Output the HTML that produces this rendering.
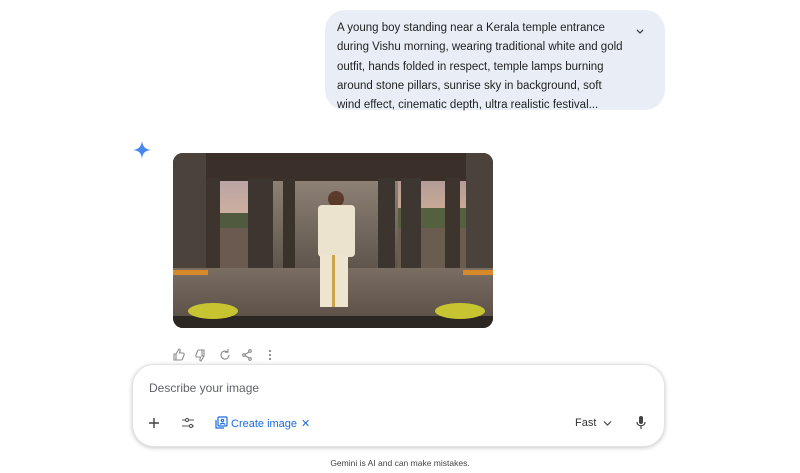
<!DOCTYPE html>
<html><head><meta charset="utf-8"><style>
*{margin:0;padding:0;box-sizing:border-box}
body{width:800px;height:473px;background:#fff;font-family:"Liberation Sans",Arial,sans-serif;position:relative;overflow:hidden;color:#1f1f1f}
.bubble{position:absolute;left:325px;top:10px;width:340px;height:100px;background:#e9eef6;border-radius:20px;padding:9px 0 0 12px;font-size:11.5px;line-height:19.3px;color:#1f1f1f;white-space:nowrap}
.chev{position:absolute;right:20px;top:18px}
.img{position:absolute;left:173px;top:153px;width:320px;height:175px;border-radius:10px;overflow:hidden;background:#2e2723}
.img div{position:absolute}
.acts{position:absolute;top:348px;left:173px}
.box{position:absolute;left:132px;top:364px;width:533px;height:83px;border-radius:22px;background:#fff;box-shadow:0 1px 4px rgba(0,0,0,.22);border:1px solid #e3e3e3}
.ph{position:absolute;left:16px;top:16px;font-size:12px;color:#5f6368}
.foot{position:absolute;top:458px;left:0;width:800px;text-align:center;font-size:8.5px;color:#444}
</style></head><body>
<div class="bubble">A young boy standing near a Kerala temple entrance<br>during Vishu morning, wearing traditional white and gold<br>outfit, hands folded in respect, temple lamps burning<br>around stone pillars, sunrise sky in background, soft<br>wind effect, cinematic depth, ultra realistic festival...
<svg class="chev" width="10" height="8" viewBox="0 0 10 8"><path d="M2 2l3 3 3-3" stroke="#444" stroke-width="1.3" fill="none"/></svg></div>

<svg style="position:absolute;left:133px;top:141px" width="18" height="18" viewBox="0 0 18 18"><path d="M9 0C9.6 5 12 8.4 18 9 12 9.6 9.6 12 9 18 8.4 12 6 9.6 0 9 6 8.4 8.4 5 9 0Z" fill="#4a86f0"/></svg>

<div class="img">
 <div style="left:0;top:0;width:320px;height:120px;background:#3a322c"></div>
 <div style="left:25px;top:28px;width:75px;height:50px;background:linear-gradient(#b9a4a4,#d8b59a)"></div>
 <div style="left:225px;top:28px;width:75px;height:50px;background:linear-gradient(#b39c98,#d9b392)"></div>
 <div style="left:25px;top:60px;width:75px;height:20px;background:#4f5a3e"></div>
 <div style="left:225px;top:55px;width:75px;height:25px;background:#55603f"></div>
 <div style="left:97px;top:28px;width:128px;height:90px;background:linear-gradient(#8d8075,#5e544b)"></div>
 <div style="left:25px;top:75px;width:75px;height:40px;background:#6b5a4f"></div>
 <div style="left:225px;top:75px;width:75px;height:40px;background:#6b5c50"></div>
 <div style="left:0;top:0;width:320px;height:28px;background:#3b3029"></div>
 <div style="left:0;top:0;width:33px;height:125px;background:#4a423b"></div>
 <div style="left:33px;top:25px;width:14px;height:90px;background:#3c342d"></div>
 <div style="left:75px;top:25px;width:25px;height:100px;background:#3d352f"></div>
 <div style="left:110px;top:25px;width:12px;height:90px;background:#3a332c"></div>
 <div style="left:205px;top:25px;width:17px;height:90px;background:#3c342e"></div>
 <div style="left:228px;top:25px;width:20px;height:100px;background:#3e3630"></div>
 <div style="left:272px;top:25px;width:15px;height:90px;background:#3c342d"></div>
 <div style="left:293px;top:0;width:27px;height:125px;background:#4a423b"></div>
 <div style="left:0;top:115px;width:320px;height:50px;background:linear-gradient(#7a6d62,#5d5148)"></div>
 <div style="left:0;top:163px;width:320px;height:12px;background:#2d2723"></div>
 <div style="left:15px;top:150px;width:50px;height:16px;background:#c7c431;border-radius:50%"></div>
 <div style="left:262px;top:150px;width:50px;height:16px;background:#c7c431;border-radius:50%"></div>
 <div style="left:0;top:117px;width:35px;height:5px;background:#d88a2a"></div>
 <div style="left:290px;top:117px;width:30px;height:5px;background:#d88a2a"></div>
 <div style="left:155px;top:38px;width:16px;height:16px;background:#5a3a28;border-radius:50%"></div>
 <div style="left:145px;top:52px;width:37px;height:52px;background:#ece3cf;border-radius:4px"></div>
 <div style="left:147px;top:102px;width:28px;height:52px;background:#eee5d0"></div>
 <div style="left:159px;top:102px;width:3px;height:52px;background:#c9a44a"></div>
</div>

<svg class="acts" width="110" height="14" viewBox="0 0 110 14" fill="none" stroke="#8a8a8a" stroke-width="1.1">
<path d="M1 6h2v6H1zM3 6l3-5c1 0 1.5 1 1 2L6.5 5H10c1 0 1.5 1 1 2l-1.5 4c-.2.6-.7 1-1.3 1H3"/>
<path d="M34 8h-2V2h2zM34 8l-3 5c-1 0-1.5-1-1-2l.5-2H27c-1 0-1.5-1-1-2l1.5-4c.2-.6.7-1 1.3-1H34" transform="translate(-3 0)"/>
<path d="M56 7a4 4 0 1 1-1.2-2.8M55 1v3.2h-3.2"/>
<circle cx="77" cy="3" r="1.3"/><circle cx="71" cy="7" r="1.3"/><circle cx="77" cy="11" r="1.3"/><path d="M72 6.5l4-2.5M72 7.5l4 2.5"/>
<circle cx="97" cy="3" r=".6" fill="#8a8a8a"/><circle cx="97" cy="7" r=".6" fill="#8a8a8a"/><circle cx="97" cy="11" r=".6" fill="#8a8a8a"/>
</svg>

<div class="box">
 <div class="ph">Describe your image</div>
 <svg style="position:absolute;left:15px;top:52px" width="12" height="12"><path d="M6 1v10M1 6h10" stroke="#444" stroke-width="1.4"/></svg>
 <svg style="position:absolute;left:48px;top:52px" width="14" height="12" fill="none" stroke="#555" stroke-width="1.1"><path d="M1 3h3M8 3h5M1 9h7M12 9h1"/><circle cx="6" cy="3" r="1.6"/><circle cx="10" cy="9" r="1.6"/></svg>
 <svg style="position:absolute;left:81px;top:51px" width="14" height="14" fill="none" stroke="#1a6be0" stroke-width="1.2"><rect x="4" y="1" width="9" height="9" rx="1"/><path d="M2 4v8h8"/><circle cx="8.5" cy="4.5" r="1.2"/><path d="M6 8.5c1-1.5 4-1.5 5 0"/></svg>
 <div style="position:absolute;left:98px;top:53px;font-size:11px;color:#1a6be0">Create image</div>
 <div style="position:absolute;left:168px;top:52px;font-size:11px;color:#1a6be0">✕</div>
 <div style="position:absolute;left:442px;top:52px;font-size:11px;color:#333">Fast</div>
 <svg style="position:absolute;left:470px;top:55px" width="9" height="7"><path d="M1 1.5l3.5 3.5 3.5-3.5" stroke="#444" stroke-width="1.2" fill="none"/></svg>
 <svg style="position:absolute;left:503px;top:51px" width="10" height="14"><rect x="3" y="0" width="4" height="8" rx="2" fill="#444"/><path d="M1 6c0 5 8 5 8 0M5 10v3" stroke="#444" stroke-width="1.2" fill="none"/></svg>
</div>
<div class="foot">Gemini is AI and can make mistakes.</div>
</body></html>
